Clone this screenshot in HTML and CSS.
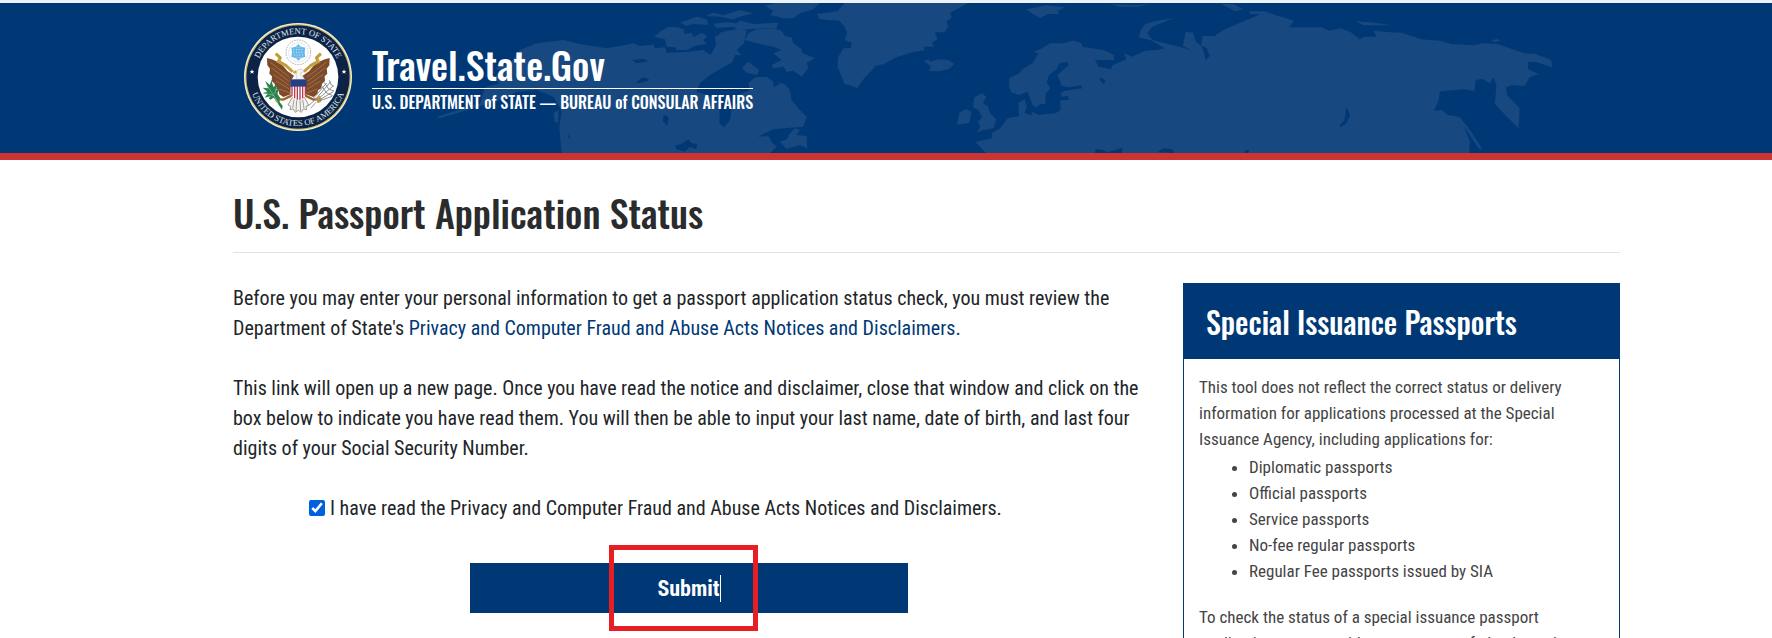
FILE: index.html
```html
<!DOCTYPE html>
<html lang="en">
<head>
  <meta charset="UTF-8">
  <meta name="viewport" content="width=device-width, initial-scale=1.0">
  <title>U.S. Passport Application Status</title>
  <link rel="stylesheet" href="styles.css">
</head>
<body>
  <header class="site-header">
    <svg class="map" viewBox="0 3 1772 150" preserveAspectRatio="xMidYMin slice" aria-hidden="true">
      <!-- North America -->
      <g transform="translate(420 0) scale(.3333)">
        <path d="M195 262L240 250L215 235L250 215L225 205L270 190L300 150L350 130L430 120L480 132L560 145L600 138L640 130L660 138L700 134L705 145L735 142L740 158L800 156L850 150L872 165L888 135L885 110L905 100L930 92L960 85L980 92L972 130L950 150L965 165L945 165L938 185L905 205L870 225L840 250L830 275L870 288L900 305L898 370L912 382L930 360L935 325L960 302L955 285L990 270L985 250L1005 232L1040 230L1060 245L1062 262L1085 248L1100 258L1110 270L1115 300L1140 330L1160 350L1150 380L1100 384L1060 388L1015 410L1045 408L1055 425L1070 440L1050 459L425 459L418 380L425 330L400 290L350 270L290 275L240 300L60 355L50 350L180 310Z"/>
        <path d="M703 110L720 95L745 80L775 82L790 88L795 102L815 98L820 112L845 98L862 108L850 122L862 132L830 136L800 150L770 150L765 142L740 140L735 118Z"/>
        <path d="M985 100L1010 88L1060 85L1085 92L1095 108L1115 112L1120 130L1145 148L1145 158L1185 175L1160 188L1165 205L1145 230L1120 212L1100 215L1090 200L1060 205L1055 195L1085 180L1060 160L1085 150L1060 140L1010 130L975 120Z"/>
        <path d="M965 205L985 185L1018 210L1010 225L980 218Z"/>
        <path d="M780 68L830 50L860 58L865 75L820 72L800 78Z"/>
        <path d="M880 72L920 66L950 70L960 62L1000 72L1075 68L1070 85L1000 86L960 90L940 80L890 84Z"/>
        <path d="M855 48L880 38L910 46L960 30L1000 40L960 50L940 58L900 50Z"/>
        <path d="M1035 18L1065 9L1200 9L1180 28L1140 40L1120 55L1090 55L1050 45L1060 32Z"/>
        <path d="M900 98L945 88L940 112L915 130L895 118Z"/>
        <path d="M1080 425L1100 418L1110 400L1125 385L1140 390L1130 405L1160 408L1162 445L1140 435L1100 448Z"/>
        <path d="M400 340L416 330L414 370L404 364Z"/>
        <path class="water" d="M732 345L746 350L742 378L728 362ZM766 436L785 432L805 418L815 430L832 432L828 448L810 440L795 455L768 447ZM648 248L668 232L688 238L680 244L655 250ZM636 180L670 176L684 184L650 190ZM444 402L450 410L446 418Z"/>
      </g>
      <!-- Greenland, Iceland and the British Isles -->
      <g transform="translate(500 0) scale(.3571 .3333)">
        <path d="M888 42L945 34L965 9L1310 9L1285 25L1260 38L1265 52L1250 65L1255 80L1245 97L1218 97L1225 118L1210 128L1215 140L1185 140L1190 150L1150 158L1110 172L1075 192L1050 198L1040 212L1020 235L1000 265L985 258L965 252L955 225L945 200L947 170L962 145L982 145L985 128L965 120L972 100L965 80L950 62L895 58Z"/>
        <path d="M1187 183L1200 178L1205 186L1225 178L1255 180L1272 192L1258 206L1230 214L1200 212L1208 200Z"/>
        <path d="M1328 292L1350 280L1362 290L1352 310L1366 318L1372 340L1390 358L1382 385L1355 390L1335 398L1345 380L1338 365L1350 352L1340 330L1325 322Z"/>
        <path d="M1280 375L1286 340L1305 326L1320 335L1315 368Z"/>
      </g>
      <!-- Europe and Asia -->
      <g transform="translate(1000 0) scale(.3827 .3333)">
        <path d="M-37 459L-52 440L-65 425L-40 420L-20 415L-22 400L0 385L20 355L50 348L48 308L65 298L70 320L64 340L82 345L85 335L100 344L145 340L158 330L158 300L180 300L178 288L160 290L160 278L170 272L215 265L212 256L180 262L162 258L150 225L180 195L175 186L155 190L148 208L128 225L122 248L132 265L120 280L118 312L105 312L98 322L86 318L72 275L50 285L30 278L24 262L24 235L50 220L62 205L85 190L100 160L88 155L110 145L130 130L165 130L190 122L212 128L215 140L270 150L298 165L298 180L248 180L258 200L290 208L295 195L330 178L325 160L345 170L380 152L410 150L430 145L390 118L500 150L478 138L485 95L505 98L512 125L528 140L538 180L548 168L540 145L525 135L530 108L560 108L580 92L620 72L690 38L735 50L768 62L755 82L840 82L860 92L890 85L915 95L940 118L950 110L985 110L975 92L1020 97L1050 98L1100 118L1150 122L1180 132L1240 136L1260 130L1300 132L1370 160L1400 162L1440 180L1443 202L1400 186L1380 185L1380 208L1408 222L1385 232L1370 258L1340 255L1322 262L1325 285L1358 325L1355 385L1320 345L1293 312L1297 255L1290 232L1280 250L1260 236L1243 240L1240 274L1215 268L1150 274L1145 305L1133 332L1155 330L1170 345L1200 350L1225 385L1262 450L1250 445L1212 378L1228 425L1226 459Z"/>
        <path d="M362 112L368 90L380 72L410 62L455 55L420 70L398 80L385 100L400 122Z"/>
        <path d="M68 28L95 22L120 16L170 22L150 32L155 42L125 42L105 54L85 42ZM288 12L350 16L390 12L360 20L310 20ZM578 12L610 12L636 28L615 34ZM650 34L690 34L720 44L655 42ZM930 64L980 68L1025 76L950 76ZM1285 120L1300 117L1308 123L1290 125Z"/>
        <path class="water" d="M905 322L915 345L905 370L890 382L888 376L900 360ZM260 232L275 240L272 252L262 244ZM248 459L250 448L270 450L280 457L320 443L318 459ZM412 457L425 445L450 448L455 459ZM640 459L640 450L652 450L648 459Z"/>
      </g>
    </svg>

    <div class="branding">
      <svg class="seal" viewBox="0 0 324 324" role="img" aria-label="Department of State seal">
        <defs>
          <path id="arc-top" d="M33 162A129 129 0 0 1 291 162"/>
          <path id="arc-bottom" d="M15 162A147 147 0 0 0 309 162"/>
          <g id="wing">
            <path fill="#7d4a2a" d="M111 143C132 147 158 160 172 182L192 196L184 210L182 252L160 260L148 252L146 240L136 234L134 220L125 212L126 198L118 190L120 175L112 165Z"/>
            <path fill="none" stroke="#b5835a" stroke-width="2" d="M120 155L178 200M124 172L176 212M130 192L176 224M138 212L178 236M148 236L180 248"/>
            <path fill="none" stroke="#c6a03c" stroke-width="9" d="M137 130L150 142L145 154L168 166L188 184"/>
            <path fill="none" stroke="#7c6425" stroke-width="1" d="M142 130L154 144L150 152L172 164"/>
          </g>
        </defs>
        <circle cx="162" cy="162" r="162" fill="#f3edc8"/>
        <circle cx="162" cy="162" r="157" fill="none" stroke="#c9b56a" stroke-width="3"/>
        <circle cx="162" cy="162" r="155" fill="#0d2346"/>
        <circle cx="162" cy="162" r="121" fill="#fff"/>
        <text class="seal-text"><textPath href="#arc-top" startOffset="50%">DEPARTMENT OF STATE</textPath></text>
        <text class="seal-text"><textPath href="#arc-bottom" startOffset="50%">UNITED STATES OF AMERICA</textPath></text>
        <path fill="#fff" d="M24 139l2 5 5 0-4 3 2 5-5-3-5 3 2-5-4-3 5 0zM300 139l2 5 5 0-4 3 2 5-5-3-5 3 2-5-4-3 5 0z"/>
        <g transform="translate(-42 -38)">
          <circle cx="205" cy="126" r="37" fill="#fff" stroke="#a9b0b8" stroke-width="3" stroke-dasharray="5 3"/>
          <circle cx="205" cy="126" r="29" fill="none" stroke="#c5cbd1" stroke-width="3" stroke-dasharray="2 2"/>
          <path fill="#68b8e8" d="M205 101L213 109L226 112L224 126L226 140L213 143L205 151L197 143L184 140L186 126L184 112L197 109Z"/>
          <path fill="none" stroke="#fff" stroke-width="2" stroke-dasharray="3 5" d="M190 118H222M190 126H221M192 134H220M200 110H212M200 142H212"/>
          <use href="#wing"/>
          <use href="#wing" transform="translate(410 0) scale(-1 1)"/>
          <path fill="#f5f3ee" stroke="#8f8c86" stroke-width="1" d="M198 208C200 198 196 190 200 182C205 174 218 174 222 184L212 188L222 208Z"/>
          <path fill="#d2a13a" d="M198 180L188 184L192 190L200 188Z"/>
          <path fill="#f4f2ee" stroke="#77726c" stroke-width="2" d="M186 262L174 284L182 288L180 298L190 296L196 306L205 300L214 306L220 296L230 298L228 288L236 284L224 262ZM192 268L188 294M200 270L198 302M210 270L212 302M218 268L222 294"/>
          <path fill="#fff" d="M182 208H228V248Q228 264 205 270Q182 264 182 248Z"/>
          <path fill="none" stroke="#b53a52" stroke-width="4" d="M186 228V258M194 228V264M202 228V268M210 228V268M218 228V264M226 228V256"/>
          <path fill="#243f82" d="M181 207H229V229H181Z"/>
          <path fill="none" stroke="#9a662c" stroke-width="7" d="M184 256L160 268L140 266M226 256L250 268L270 266"/>
          <path fill="#d29a2c" d="M134 266L142 256L152 264L148 278L138 276ZM276 266L268 256L258 264L262 278L272 276Z"/>
          <path fill="#28824a" d="M156 298L146 284L138 268L130 262L122 268L116 264L122 258L104 262L112 252L98 248L112 244L98 232L114 234L106 212L120 224L124 208L130 230L142 222L138 238L148 236L142 250L150 262L148 274L158 286Z"/>
          <path fill="none" stroke="#fff" stroke-width="1" d="M144 276L108 220M132 256L106 248M134 250L140 230"/>
          <path fill="none" stroke="#8b8d8f" stroke-width="3" d="M256 268L302 214M262 268L308 228M266 270L310 244M250 264L290 218M262 274L306 258M298 210L304 224L312 228M282 216L296 236L312 242M276 228L290 248L308 256"/>
          <path fill="none" stroke="#9a9a98" stroke-width="3" d="M258 276L242 294M252 272L232 288"/>
        </g>
      </svg>
      <div class="brand-text">
        <a class="brand-name" href="#">Travel.State.Gov</a>
        <span class="brand-dept">U.S. DEPARTMENT of STATE — BUREAU of CONSULAR AFFAIRS</span>
      </div>
    </div>
  </header>

  <main class="page">
    <h1>U.S. Passport Application Status</h1>

    <div class="columns">
      <form class="status-form">
        <p>Before you may enter your personal information to get a passport application status check, you must review the Department of State's <a href="#">Privacy and Computer Fraud and Abuse Acts Notices and Disclaimers.</a></p>
        <p>This link will open up a new page. Once you have read the notice and disclaimer, close that window and click on the box below to indicate you have read them. You will then be able to input your last name, date of birth, and last four digits of your Social Security Number.</p>
        <div class="agree">
          <input type="checkbox" id="agree" checked>
          <label for="agree">I have read the Privacy and Computer Fraud and Abuse Acts Notices and Disclaimers.</label>
        </div>
        <div class="submit-row">
          <button type="button" class="submit-btn"><span class="submit-label">Submit</span></button>
          <div class="highlight"></div>
        </div>
      </form>

      <aside class="special">
        <h2>Special Issuance Passports</h2>
        <div class="special-body">
          <p>This tool does not reflect the correct status or delivery information for applications processed at the Special Issuance Agency, including applications for:</p>
          <ul>
            <li>Diplomatic passports</li>
            <li>Official passports</li>
            <li>Service passports</li>
            <li>No-fee regular passports</li>
            <li>Regular Fee passports issued by SIA</li>
          </ul>
          <p>To check the status of a special issuance passport application, you may either contact your federal travel</p>
        </div>
      </aside>
    </div>
  </main>
</body>
</html>
```
FILE: styles.css
```css
:root {
  --navy: #003875;
  --red: #cc3333;
  --text: #212529;
}

* {
  box-sizing: border-box;
}

html {
  overflow: hidden;
}

body {
  margin: 0;
  font-family: "Roboto Condensed", Roboto, sans-serif;
  font-size: 20px;
  line-height: 30px;
  color: var(--text);
  background-color: #fff;
  border-top: 3px solid #eef3f8;
}

/* header */
.site-header {
  position: relative;
  background-color: var(--navy);
  border-bottom: 7px solid var(--red);
}

.map {
  position: absolute;
  top: 0;
  left: 0;
  width: 100%;
  height: 100%;
  fill: #17487f;
}

.map .water {
  fill: var(--navy);
}

.branding {
  position: relative;
  display: flex;
  align-items: center;
  gap: 20px;
  padding: 20px 0 22px 244px;
}

.seal {
  width: 108px;
  height: 108px;
}

.seal-text {
  font-family: "Liberation Serif", serif;
  font-size: 26px;
  fill: #dfe6ee;
  text-anchor: middle;
}

.brand-text {
  display: flex;
  flex-direction: column;
  font-family: Oswald, sans-serif;
  font-weight: 500;
  color: #fff;
}

.brand-name {
  font-size: 38px;
  line-height: 48px;
  color: #fff;
  text-decoration: none;
  border-bottom: 1px solid #fff;
}

.brand-dept {
  font-size: 16px;
  line-height: 26px;
}

/* content */
.page {
  padding: 28px 152px 0 233px;
}

h1,
h2 {
  margin: 0;
  font-family: Oswald, sans-serif;
  font-weight: 500;
}

h1 {
  padding-bottom: 16px;
  font-size: 38px;
  line-height: 48px;
  color: #2a2b2d;
  border-bottom: 1px solid #e2e2e2;
}

.columns {
  display: grid;
  grid-template-columns: minmax(0, 1fr) 437px;
  gap: 38px;
  margin-top: 30px;
}

.status-form p {
  margin: 0 0 30px;
}

.status-form a {
  color: var(--navy);
  text-decoration: none;
}

.agree {
  display: flex;
  align-items: center;
  gap: 5px;
  padding-left: 76px;
}

.agree input {
  width: 16px;
  height: 16px;
  margin: 0;
  accent-color: #0060df;
}

.submit-row {
  position: relative;
  display: flex;
  justify-content: center;
  margin-top: 40px;
}

.submit-btn {
  width: 48%;
  height: 50px;
  padding: 0;
  font-family: inherit;
  font-size: 22px;
  font-weight: 700;
  line-height: 27px;
  color: #fff;
  background-color: var(--navy);
  border: none;
  cursor: pointer;
}

.submit-label {
  display: inline-block;
  border-right: 1px solid #fff;
}

/* frame drawn over the button */
.highlight {
  position: absolute;
  top: -18px;
  left: calc(50% - 80px);
  width: 149px;
  height: 86px;
  border: 5px solid #e81e25;
  pointer-events: none;
}

.special {
  font-size: 17px;
  line-height: 26px;
  color: #444;
  border: 1px solid var(--navy);
}

.special h2 {
  padding: 15px 22px;
  font-size: 30px;
  line-height: 45px;
  color: #fff;
  background-color: var(--navy);
}

.special-body {
  padding: 15px;
}

.special-body p {
  margin: 0;
}

.special-body ul {
  margin: 2px 0 20px;
  padding-left: 50px;
}
```
